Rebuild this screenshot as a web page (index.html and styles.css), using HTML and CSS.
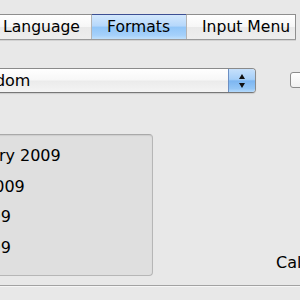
FILE: index.html
```html
<!DOCTYPE html>
<html>

<head>
  <title>International - Formats</title>
  <link rel="stylesheet" href="styles.css">
</head>

<body>
  <div id="tab-bar">
    <div class="tab tab-language">Language</div>
    <div class="tab tab-formats selected">Formats</div>
    <div class="tab tab-input">Input Menu</div>
  </div>

  <div id="region-row">
    <div class="popup">
      <span class="popup-label">United Kingdom</span>
      <span class="popup-arrows">
        <span class="arrow-up"></span>
        <span class="arrow-down"></span>
      </span>
    </div>
    <div class="checkbox"></div>
  </div>

  <div id="dates-row">
    <div class="dates-box">
      <div class="date-line">5 January 2009</div>
      <div class="date-line">5 Jan 2009</div>
      <div class="date-line">05/01/09</div>
      <div class="date-line">5/1/2009</div>
    </div>
    <div class="calendar-label">Calendar:</div>
  </div>

  <div id="separator"></div>
</body>

</html>
```

FILE: styles.css
```css
body {
  margin: 0;
  padding: 0;
  width: 300px;
  height: 300px;
  overflow: hidden;
  background-color: #e8e8e8;
  font-family: "DejaVu Sans", "Liberation Sans", sans-serif;
  font-size: 16px;
  color: #000;
}

/* segmented tab control */
#tab-bar {
  display: flex;
  margin-top: 14px;
  margin-left: -12px;
  width: 308px;
  height: 24px;
  border-top: 1px solid #8e8e8e;
  border-bottom: 1px solid #9a9a9a;
  background: linear-gradient(#ffffff, #f6f6f6 50%, #e9e9e9 52%, #eeeeee);
  box-shadow: 0 1px 0 #d2d2d2;
}

.tab {
  flex: none;
  font-size: 15.6px;
  line-height: 24px;
  white-space: nowrap;
  box-sizing: border-box;
}

.tab-language {
  width: 104px;
  padding-left: 15px;
  border-right: 1px solid #b4b4b4;
}

.tab-formats {
  width: 94px;
  padding-left: 15px;
}

.tab-input {
  width: 110px;
  padding-left: 15px;
  border-left: 1px solid #b4b4b4;
  border-right: 1px solid #8e8e8e;
}

.tab.selected {
  margin-top: -1px;
  border-top: 1px solid #3c4f93;
  line-height: 24px;
  height: 25px;
  background: linear-gradient(#d3e8fd, #b6d8fb 45%, #92c6f8 52%, #a6d1fa 85%, #c0e0fc);
}

/* region popup */
#region-row {
  display: flex;
  align-items: center;
  margin-top: 28px;
}

.popup {
  display: flex;
  flex: none;
  width: 363px;
  height: 25px;
  margin-left: -107px;
  box-sizing: border-box;
  border: 1px solid #8a8a8a;
  border-bottom-color: #777;
  border-radius: 4px;
  background: linear-gradient(#ffffff, #f7f7f7 48%, #ebebeb 52%, #f4f4f4);
  box-shadow: 0 1px 1px rgba(0, 0, 0, 0.12);
  overflow: hidden;
}

.popup-label {
  flex: 1;
  padding-left: 8px;
  line-height: 23px;
  white-space: nowrap;
}

.popup-arrows {
  display: flex;
  flex-direction: column;
  align-items: center;
  justify-content: center;
  gap: 4px;
  width: 26px;
  border-left: 1px solid #6d8fc2;
  background: linear-gradient(#c6e0fb, #a6cff8 45%, #7db6f1 52%, #94c6f6 85%, #b5dafc);
}

.arrow-up,
.arrow-down {
  width: 0;
  height: 0;
  border-left: 3.5px solid transparent;
  border-right: 3.5px solid transparent;
}

.arrow-up {
  border-bottom: 5px solid #111;
}

.arrow-down {
  border-top: 5px solid #111;
}

.checkbox {
  flex: none;
  width: 16px;
  height: 16px;
  margin-left: 34px;
  margin-top: -2px;
  box-sizing: border-box;
  border: 1px solid #8c8c8c;
  border-radius: 3px;
  background: linear-gradient(#ffffff, #f1f1f1);
}

/* dates */
#dates-row {
  display: flex;
  align-items: flex-end;
  margin-top: 41px;
}

.dates-box {
  flex: none;
  width: 225px;
  height: 142px;
  margin-left: -72px;
  padding: 6px 0 0 10px;
  box-sizing: border-box;
  border: 1px solid #b6b6b6;
  border-top-color: #a9a9a9;
  border-radius: 4px;
  background-color: #dfdfdf;
  box-shadow: inset 0 1px 1px rgba(0, 0, 0, 0.08);
}

.date-line {
  line-height: 30.5px;
  white-space: nowrap;
}

.calendar-label {
  margin-left: 123px;
  margin-bottom: 4px;
  white-space: nowrap;
}

#separator {
  margin-top: 9px;
  height: 1px;
  border-top: 1px solid #a2a2a2;
  background-color: #f6f6f6;
}
```
